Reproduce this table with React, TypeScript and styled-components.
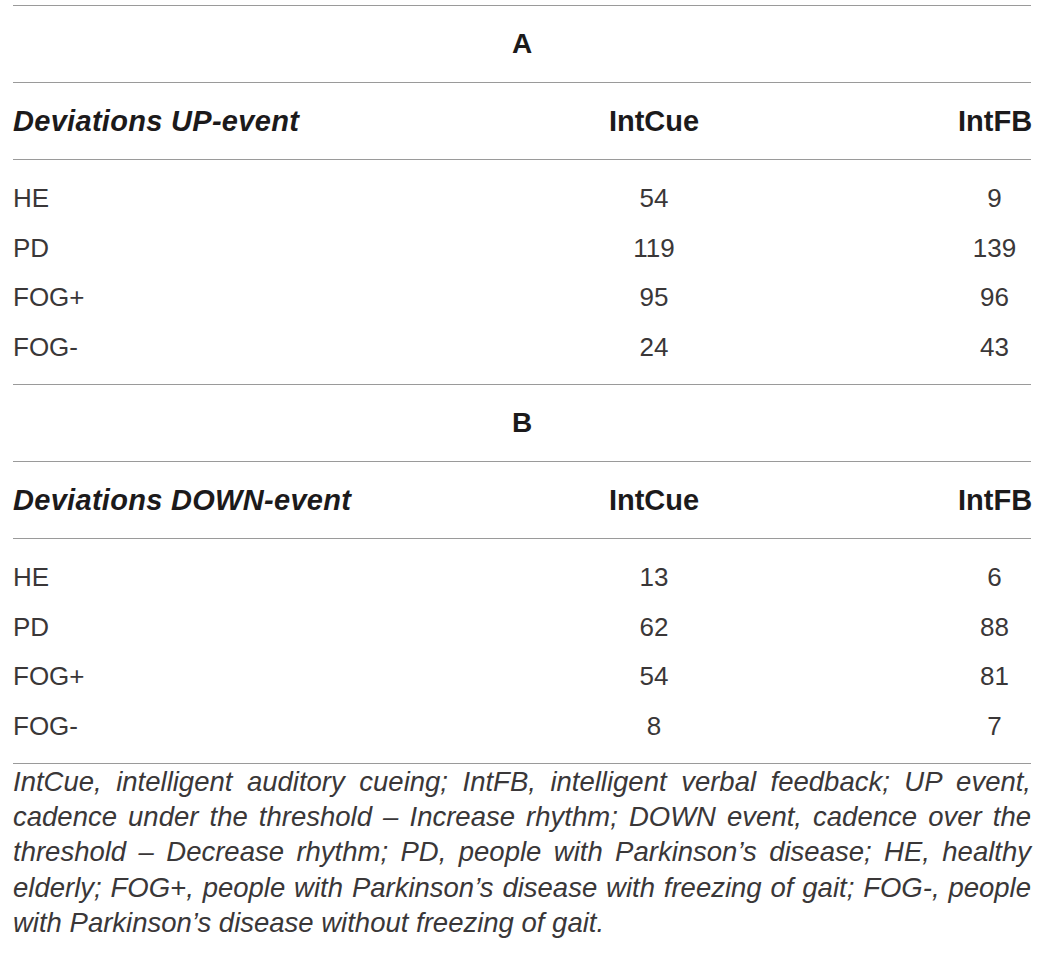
import React from 'react';
import styled, { createGlobalStyle } from 'styled-components';

const GlobalStyle = createGlobalStyle`
  html, body {
    margin: 0;
    padding: 0;
    background: #ffffff;
  }
  body {
    font-family: "Liberation Sans", Arial, Helvetica, sans-serif;
    color: #231f20;
  }
`;

const Page = styled.div`
  width: 1018px;
  padding: 5px 9px 0 13px;
`;

const Table = styled.div`
  border-top: 1px solid #9a9a9a;
`;

const TitleRow = styled.div`
  height: 76px;
  display: flex;
  align-items: center;
  justify-content: center;
  font-weight: 700;
  font-size: 28px;
  color: #1c1a1b;
  border-bottom: 1px solid #9a9a9a;
`;

const Grid = styled.div`
  display: grid;
  grid-template-columns: 337px 608px 73px;
  align-items: center;
`;

const HeaderRow = styled(Grid)`
  height: 76px;
  border-bottom: 1px solid #9a9a9a;
  font-weight: 700;
  font-size: 29px;
  color: #1c1a1b;
`;

const Body = styled.div`
  box-sizing: border-box;
  height: 225px;
  padding: 14px 0 12px;
  border-bottom: 1px solid #9a9a9a;
`;

const DataRow = styled(Grid)`
  height: 49.5px;
  font-size: 26px;
  color: #3a3738;
`;

const Cell = styled.div<{ $align?: 'left' | 'center'; $italic?: boolean; $wide?: boolean }>`
  text-align: ${(p) => p.$align ?? 'center'};
  font-style: ${(p) => (p.$italic ? 'italic' : 'normal')};
  letter-spacing: ${(p) => (p.$wide ? '0.3px' : '0')};
  white-space: nowrap;
`;

const Caption = styled.div`
  font-style: italic;
  font-size: 27.5px;
  line-height: 35.2px;
  color: #3a3738;
`;

const CaptionLine = styled.span<{ $last?: boolean }>`
  display: block;
  text-align: ${(p) => (p.$last ? 'left' : 'justify')};
  text-align-last: ${(p) => (p.$last ? 'left' : 'justify')};
  white-space: ${(p) => (p.$last ? 'nowrap' : 'normal')};
`;

type Section = {
  title: string;
  heading: string;
  rows: [string, string, string][];
};

const sections: Section[] = [
  {
    title: 'A',
    heading: 'Deviations UP-event',
    rows: [
      ['HE', '54', '9'],
      ['PD', '119', '139'],
      ['FOG+', '95', '96'],
      ['FOG-', '24', '43'],
    ],
  },
  {
    title: 'B',
    heading: 'Deviations DOWN-event',
    rows: [
      ['HE', '13', '6'],
      ['PD', '62', '88'],
      ['FOG+', '54', '81'],
      ['FOG-', '8', '7'],
    ],
  },
];

const captionLines = [
  'IntCue, intelligent auditory cueing; IntFB, intelligent verbal feedback; UP event,',
  'cadence under the threshold \u2013 Increase rhythm; DOWN event, cadence over the',
  'threshold \u2013 Decrease rhythm; PD, people with Parkinson\u2019s disease; HE, healthy',
  'elderly; FOG+, people with Parkinson\u2019s disease with freezing of gait; FOG-, people',
  'with Parkinson\u2019s disease without freezing of gait.',
];

export default function App() {
  return (
    <>
      <GlobalStyle />
      <Page>
        <Table>
          {sections.map((s) => (
            <React.Fragment key={s.title}>
              <TitleRow>{s.title}</TitleRow>
              <HeaderRow>
                <Cell $align="left" $italic $wide>
                  {s.heading}
                </Cell>
                <Cell>IntCue</Cell>
                <Cell>IntFB</Cell>
              </HeaderRow>
              <Body>
                {s.rows.map((r) => (
                  <DataRow key={r[0]}>
                    <Cell $align="left">{r[0]}</Cell>
                    <Cell>{r[1]}</Cell>
                    <Cell>{r[2]}</Cell>
                  </DataRow>
                ))}
              </Body>
            </React.Fragment>
          ))}
        </Table>
        <Caption>
          {captionLines.map((line, i) => (
            <CaptionLine key={i} $last={i === captionLines.length - 1}>
              {line}
            </CaptionLine>
          ))}
        </Caption>
      </Page>
    </>
  );
}
